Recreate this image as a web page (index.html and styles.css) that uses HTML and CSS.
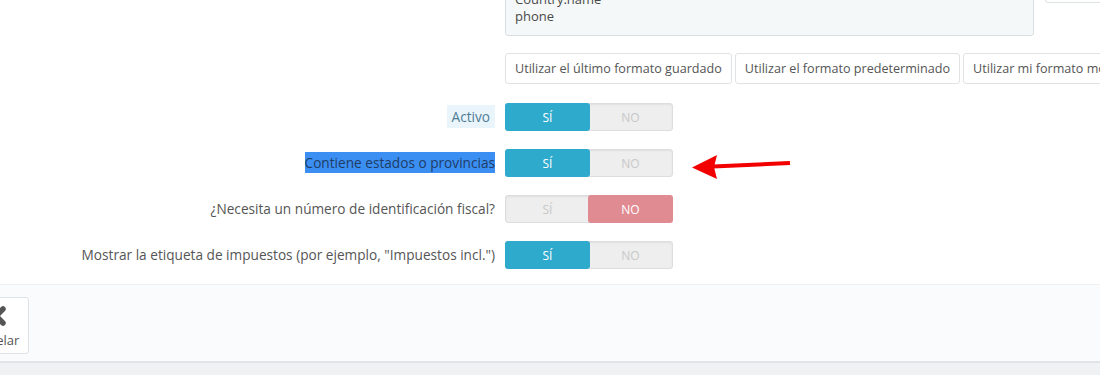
FILE: index.html
```html
<!DOCTYPE html>
<html lang="es">
<head>
  <meta charset="UTF-8">
  <meta name="viewport" content="width=device-width, initial-scale=1.0">
  <title>País</title>
  <link rel="stylesheet" href="styles.css">
</head>
<body>
  <div class="page">
    <div class="panel">
      <div class="form">
        <div class="row row-layout">
          <div class="label"></div>
          <div class="control layout-wrap">
            <div class="textarea">State.name<br>Country.name<br>phone</div>
            <button type="button" class="side-btn"></button>
          </div>
        </div>

        <div class="row row-buttons">
          <div class="label"></div>
          <div class="control btn-group">
            <button type="button" class="btn">Utilizar el último formato guardado</button>
            <button type="button" class="btn">Utilizar el formato predeterminado</button>
            <button type="button" class="btn">Utilizar mi formato modificado</button>
          </div>
        </div>

        <div class="row row-switch first">
          <div class="label"><span class="hl-light">Activo</span></div>
          <div class="control">
            <div class="switch">
              <span class="opt on-yes">SÍ</span>
              <span class="opt">NO</span>
            </div>
          </div>
        </div>

        <div class="row row-switch">
          <div class="label"><span class="hl-select">Contiene estados o provincias</span></div>
          <div class="control">
            <div class="switch">
              <span class="opt on-yes">SÍ</span>
              <span class="opt">NO</span>
            </div>
          </div>
        </div>

        <div class="row row-switch">
          <div class="label">¿Necesita un número de identificación fiscal?</div>
          <div class="control">
            <div class="switch">
              <span class="opt">SÍ</span>
              <span class="opt on-no">NO</span>
            </div>
          </div>
        </div>

        <div class="row row-switch">
          <div class="label">Mostrar la etiqueta de impuestos (por ejemplo, "Impuestos incl.")</div>
          <div class="control">
            <div class="switch">
              <span class="opt on-yes">SÍ</span>
              <span class="opt">NO</span>
            </div>
          </div>
        </div>
      </div>

      <div class="panel-footer">
        <button type="button" class="cancel">
          <svg class="cancel-icon" width="24" height="20" viewBox="0 0 24 20">
            <path d="M5 3 L19 17 M19 3 L5 17" stroke="#555" stroke-width="5.5" stroke-linecap="round" fill="none"/>
          </svg>
          <span>Cancelar</span>
        </button>
      </div>
    </div>

    <!-- flecha roja dibujada encima -->
    <svg class="arrow" width="110" height="35" viewBox="0 0 110 35">
      <line x1="28" y1="16.5" x2="105" y2="13" stroke="#f20000" stroke-width="4"/>
      <polygon points="7,17.5 32,5 29,17 32,29" fill="#f20000"/>
    </svg>
  </div>
</body>
</html>
```

FILE: styles.css
```css
html, body {
  margin: 0;
  padding: 0;
}
body {
  font-family: "Open Sans", "Liberation Sans", sans-serif;
  font-size: 13px;
  color: #555;
  background-color: #eff1f2;
  overflow: hidden;
  width: 1100px;
  height: 375px;
}
.page {
  position: relative;
  width: 1100px;
}
.panel {
  display: flow-root;
  margin-left: -60px;
  width: 1240px;
  background-color: #fff;
}
.form {
  display: flex;
  flex-direction: column;
  margin-top: -33px;
  padding-bottom: 15px;
}
.row {
  display: grid;
  grid-template-columns: 555px 1fr;
  column-gap: 10px;
  align-items: center;
}
.label {
  text-align: right;
  line-height: 18px;
  font-size: 13.65px;
}
.control {
  display: flex;
}

/* textarea de formato */
.layout-wrap {
  align-items: flex-start;
  gap: 11px;
}
.textarea {
  width: 509px;
  padding: 6px 9px 10px;
  line-height: 17px;
  background-color: #f5f8f9;
  border: 1px solid #d8e0e4;
  border-radius: 3px;
  color: #4a4a4a;
}
.side-btn {
  width: 80px;
  height: 36px;
  background: #fff;
  border: 1px solid #dde2e5;
  border-radius: 3px;
}

/* botones de formato */
.row-buttons {
  margin-top: 17px;
}
.btn-group {
  gap: 3px;
}
.btn {
  height: 31px;
  padding: 0 9px;
  font-family: inherit;
  font-size: 12.6px;
  color: #555;
  background: #fff;
  border: 1px solid #dfe3e6;
  border-radius: 3px;
  white-space: nowrap;
}

/* interruptores */
.row-switch {
  margin-top: 18px;
}
.row-switch.first {
  margin-top: 19px;
}
.switch {
  display: flex;
  width: 168px;
  height: 28px;
  background-color: #eee;
  border: 1px solid #ddd;
  border-radius: 3px;
  box-sizing: border-box;
  box-shadow: inset 0 1px 2px rgba(0, 0, 0, 0.06);
}
.opt {
  flex: 1;
  display: flex;
  align-items: center;
  justify-content: center;
  font-size: 12px;
  color: #c8c8c8;
  border-radius: 3px;
  margin: -1px;
}
.opt.on-yes {
  background-color: #2eaacd;
  color: #fff;
}
.opt.on-no {
  background-color: #e08b92;
  color: #fff;
}

.hl-light {
  background-color: #e9f5fb;
  padding: 2px 5px;
  color: #4f7c95;
}
.hl-select {
  background-color: #3b8ff2;
  color: #1e3c66;
  padding: 1px 0;
}

/* pie del panel */
.panel-footer {
  background-color: #fafbfc;
  border-top: 1px solid #eef0f1;
  border-bottom: 2px solid #e1e4e6;
  padding: 12px 17px 7px;
}
.cancel {
  display: flex;
  flex-direction: column;
  align-items: center;
  justify-content: center;
  gap: 5px;
  width: 72px;
  height: 57px;
  padding: 4px 0 0;
  background: #fff;
  border: 1px solid #dde2e5;
  border-radius: 3px;
  font-family: inherit;
  font-size: 13px;
  color: #555;
}
.cancel-icon {
  margin-left: 6px;
}

.arrow {
  position: absolute;
  left: 685px;
  top: 150px;
}
```
